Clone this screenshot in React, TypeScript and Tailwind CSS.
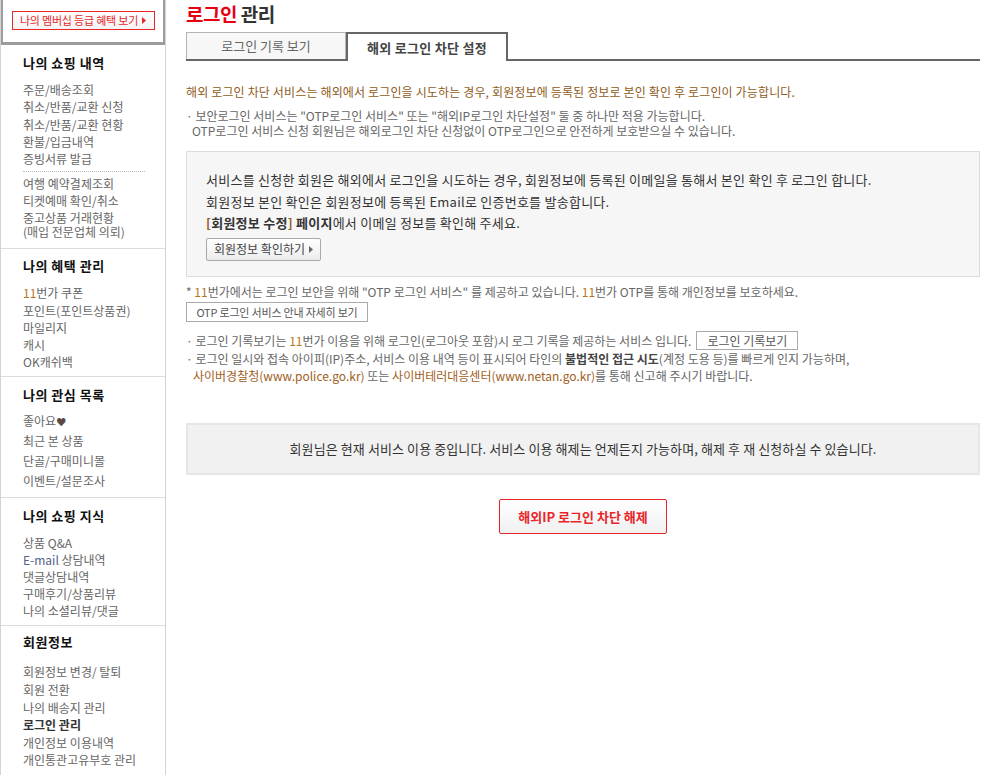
import React from "react";

const font = "font-['Noto_Sans_CJK_KR','Noto_Sans',sans-serif]";

function Tri({ className = "fill-[#666]" }: { className?: string }) {
  return (
    <svg width="4" height="7" viewBox="0 0 4 7" className={`inline-block shrink-0 ${className}`}>
      <path d="M0 0 L4 3.5 L0 7 Z" />
    </svg>
  );
}

function Section({
  title,
  children,
  className = "pt-[9px] pb-[6px] border-b border-[#dcdcdc]",
}: {
  title: string;
  children: React.ReactNode;
  className?: string;
}) {
  return (
    <div className={`pl-[22px] ${className}`}>
      <div className="text-[13px] font-bold leading-[17px] tracking-[0.5px] text-[#111]">{title}</div>
      {children}
    </div>
  );
}

function Sidebar() {
  return (
    <aside className="w-[166px] shrink-0 border-r border-l border-[#d4d4d4] text-[12px] text-[#666]">
      <div className="flex h-[45px] items-start justify-center border-x-2 border-b-[3px] border-[#9c9c9c] pt-[11px]">
        <button className="flex h-[19px] w-[143px] items-center justify-center gap-[4px] border border-[#e8262a] bg-gradient-to-b from-white to-[#f3f3f3] text-[11px] leading-none tracking-[-0.2px] text-[#e8262a]">
          나의 멤버십 등급 혜택 보기 <Tri className="fill-[#e8262a]" />
        </button>
      </div>

      <Section title="나의 쇼핑 내역" className="pt-[9px] pb-[9px] border-b border-[#dcdcdc]">
        <ul className="mt-[10px] leading-[17.3px]">
          <li>주문/배송조회</li>
          <li>취소/반품/교환 신청</li>
          <li>취소/반품/교환 현황</li>
          <li>환불/입금내역</li>
          <li>증빙서류 발급</li>
        </ul>
        <div className="mt-[4px] mb-[3px] mr-[20px] border-t border-dotted border-[#bbb]" />
        <ul className="leading-[17px]">
          <li>여행 예약결제조회</li>
          <li>티켓예매 확인/취소</li>
          <li className="pt-[2px] leading-[14px]">
            중고상품 거래현황
            <br />
            (매입 전문업체 의뢰)
          </li>
        </ul>
      </Section>

      <Section title="나의 혜택 관리" className="pt-[8px] pb-[5px] border-b border-[#dcdcdc]">
        <ul className="mt-[10px] leading-[17.2px]">
          <li>
            <span className="text-[#b5761f]">11</span>번가 쿠폰
          </li>
          <li>포인트(포인트상품권)</li>
          <li>마일리지</li>
          <li>캐시</li>
          <li>OK캐쉬백</li>
        </ul>
      </Section>

      <Section title="나의 관심 목록" className="pt-[9px] pb-[7px] border-b border-[#dcdcdc]">
        <ul className="mt-[8px] leading-[19.7px]">
          <li>
            좋아요<span className="text-[10px] text-[#5a4a45]">♥</span>
          </li>
          <li>최근 본 상품</li>
          <li>단골/구매미니몰</li>
          <li>이벤트/설문조사</li>
        </ul>
      </Section>

      <Section title="나의 쇼핑 지식" className="pt-[9px] pb-[6px] border-b border-[#dcdcdc]">
        <ul className="mt-[10px] leading-[17px]">
          <li>상품 Q&amp;A</li>
          <li>
            <span className="text-[#55608a]">E-mail</span> 상담내역
          </li>
          <li>댓글상담내역</li>
          <li>구매후기/상품리뷰</li>
          <li>나의 소셜리뷰/댓글</li>
        </ul>
      </Section>

      <Section title="회원정보" className="pt-[7px] pb-[6px]">
        <ul className="mt-[13px] leading-[17.6px]">
          <li>회원정보 변경/ 탈퇴</li>
          <li>회원 전환</li>
          <li>나의 배송지 관리</li>
          <li className="font-bold text-[#333]">로그인 관리</li>
          <li>개인정보 이용내역</li>
          <li>개인통관고유부호 관리</li>
        </ul>
      </Section>
    </aside>
  );
}

function Main() {
  return (
    <main className="flex-1 pl-[20px] pr-[8px]">
      <h1 className="text-[19px] font-bold leading-[28px] tracking-[-0.5px] text-[#333]">
        <span className="text-[#e60012]">로그인</span> 관리
      </h1>

      <div className="mt-[4px] flex items-end border-b-2 border-[#666]">
        <div className="flex h-[27px] w-[160px] items-center justify-center border border-b-0 border-[#b4b4b4] bg-[#f7f7f7] text-[13px] text-[#666]">
          로그인 기록 보기
        </div>
        <div className="-mb-[2px] flex h-[29px] w-[162px] items-center justify-center border-2 border-b-0 border-[#666] bg-white text-[13px] font-bold tracking-[0.3px] text-[#444]">
          해외 로그인 차단 설정
        </div>
      </div>

      <p className="mt-[23px] text-[12px] leading-[16px] tracking-[0.15px] text-[#8f5b22]">
        해외 로그인 차단 서비스는 해외에서 로그인을 시도하는 경우, 회원정보에 등록된 정보로 본인 확인 후 로그인이 가능합니다.
      </p>
      <div className="mt-[8px] text-[12px] leading-[15px] text-[#666]">
        <p>· 보안로그인 서비스는 "OTP로그인 서비스" 또는 "해외IP로그인 차단설정" 둘 중 하나만 적용 가능합니다.</p>
        <p className="pl-[6px]">OTP로그인 서비스 신청 회원님은 해외로그인 차단 신청없이 OTP로그인으로 안전하게 보호받으실 수 있습니다.</p>
      </div>

      <div className="mt-[13px] h-[126px] border border-[#dcdcdc] bg-[#f6f6f6] pl-[19px] pt-[17px] text-[13px] leading-[21.5px] tracking-[0.25px] text-[#333]">
        <p>서비스를 신청한 회원은 해외에서 로그인을 시도하는 경우, 회원정보에 등록된 이메일을 통해서 본인 확인 후 로그인 합니다.</p>
        <p>회원정보 본인 확인은 회원정보에 등록된 Email로 인증번호를 발송합니다.</p>
        <p>
          <b>
            <span className="text-[#8f5b22]">[</span>회원정보 수정<span className="text-[#8f5b22]">]</span> 페이지
          </b>
          에서 이메일 정보를 확인해 주세요.
        </p>
        <button className="mt-[4px] flex h-[23px] items-center gap-[4px] rounded-[2px] border border-[#a9a9a9] bg-gradient-to-b from-white to-[#ececec] px-[7px] text-[12px] tracking-normal text-[#444]">
          회원정보 확인하기 <Tri />
        </button>
      </div>

      <div className="mt-[7px] text-[12px] leading-[16px] text-[#666]">
        <p>
          * <span className="text-[#b5761f]">11</span>번가에서는 로그인 보안을 위해 "OTP 로그인 서비스" 를 제공하고 있습니다.{" "}
          <span className="text-[#b5761f]">11</span>번가 OTP를 통해 개인정보를 보호하세요.
        </p>
        <button className="mt-[2px] flex h-[20px] w-[182px] items-center justify-center whitespace-nowrap border border-[#aaa] bg-white text-[11px] tracking-[-0.2px] text-[#555]">
          OTP 로그인 서비스 안내 자세히 보기
        </button>
        <div className="mt-[9px] flex h-[19px] items-center">
          <span>
            · 로그인 기록보기는 <span className="text-[#b5761f]">11</span>번가 이용을 위해 로그인(로그아웃 포함)시 로그 기록을 제공하는 서비스 입니다.
          </span>
          <button className="ml-[5px] flex h-[19px] w-[102px] items-center justify-center border border-[#aaa] bg-white text-[12px] text-[#555]">
            로그인 기록보기
          </button>
        </div>
        <p className="leading-[17px]">
          · 로그인 일시와 접속 아이피(IP)주소, 서비스 이용 내역 등이 표시되어 타인의{" "}
          <b className="text-[#444]">불법적인 접근 시도</b>(계정 도용 등)를 빠르게 인지 가능하며,
        </p>
        <p className="pl-[7px] leading-[17px]">
          <span className="text-[#a0601d]">사이버경찰청(www.police.go.kr)</span> 또는{" "}
          <span className="text-[#a0601d]">사이버테러대응센터(www.netan.go.kr)</span>를 통해 신고해 주시기 바랍니다.
        </p>
      </div>

      <div className="mt-[39px] flex h-[52px] items-center justify-center border-2 border-[#e6e6e6] bg-[#f1f1f1] text-[13px] tracking-[0.1px] text-[#333]">
        회원님은 현재 서비스 이용 중입니다. 서비스 이용 해제는 언제든지 가능하며, 해제 후 재 신청하실 수 있습니다.
      </div>

      <div className="mt-[24px] flex justify-center">
        <button className="h-[35px] w-[168px] rounded-[2px] border border-[#e8262a] bg-gradient-to-b from-white to-[#f0f0f0] text-[13px] font-bold text-[#e8262a]">
          해외IP 로그인 차단 해제
        </button>
      </div>
    </main>
  );
}

export default function App() {
  return (
    <div className={`flex w-[988px] bg-white ${font}`}>
      <Sidebar />
      <Main />
    </div>
  );
}
